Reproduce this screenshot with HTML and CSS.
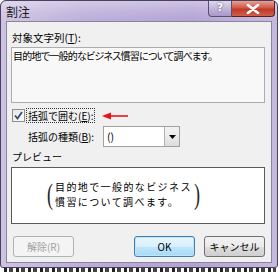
FILE: index.html
```html
<!DOCTYPE html>
<html lang="ja">
<head>
    <meta charset="UTF-8">
    <title>割注</title>
    <link rel="stylesheet" href="styles.css">
</head>
<body>
    <div class="window">
        <div class="title-bar">
            <span class="title">割注</span>
            <div class="caption-buttons">
                <div class="help-btn">?</div>
                <div class="close-btn">
                    <svg width="14" height="10" viewBox="0 0 14 10">
                        <path d="M2 1 L12 9 M12 1 L2 9" stroke="#fff" stroke-width="2.6" stroke-linecap="round"/>
                    </svg>
                </div>
            </div>
        </div>
        <div class="client">
            <div class="label first">対象文字列(<u>T</u>):</div>
            <div class="text-box">目的地で一般的なビジネス慣習について調べます。</div>

            <div class="check-row">
                <span class="checkbox">
                    <svg width="11" height="11" viewBox="0 0 11 11">
                        <path d="M2 5.5 L4.5 8.5 L9 2" fill="none" stroke="#3c4a6e" stroke-width="1.8"/>
                    </svg>
                </span>
                <span class="check-label">括弧で囲む(<u>E</u>):</span>
                <svg class="arrow" width="28" height="10" viewBox="0 0 28 10">
                    <path d="M8 5 L27 5" stroke="#e8151b" stroke-width="1.6"/>
                    <path d="M1 5 L10 1.5 L10 8.5 Z" fill="#e8151b"/>
                </svg>
            </div>

            <div class="combo-row">
                <span class="combo-label">括弧の種類(<u>B</u>):</span>
                <div class="combo">
                    <span class="combo-value">()</span>
                    <span class="combo-btn">
                        <svg width="7" height="4" viewBox="0 0 7 4"><path d="M0 0 L7 0 L3.5 4 Z" fill="#000"/></svg>
                    </span>
                </div>
            </div>

            <div class="label preview-label">プレビュー</div>
            <div class="preview">
                <span class="paren">(</span>
                <div class="preview-lines">
                    <div>目的地で一般的なビジネス</div>
                    <div>慣習について調べます。</div>
                </div>
                <span class="paren right">)</span>
            </div>

            <div class="buttons">
                <div class="btn disabled">解除(R)</div>
                <div class="spacer"></div>
                <div class="btn default">OK</div>
                <div class="btn">キャンセル</div>
            </div>
        </div>
    </div>
    <div class="behind"></div>
</body>
</html>
```

FILE: styles.css
```css
body{
    margin: 0;
    background-color: #fff;
    font-family: "Noto Sans CJK JP", "Noto Sans", sans-serif;
    font-size: 10.5px;
    color: #000;
    width: 280px;
    height: 272px;
    overflow: hidden;
}
.window{
    width: 276px;
    height: 266px;
    border: 1px solid #4a4060;
    border-radius: 6px 6px 3px 3px;
    background: linear-gradient(90deg, #cfc3e3 0%, #bcaeda 30%, #b3a3d4 70%, #c6b9df 100%);
    box-sizing: content-box;
}
.title-bar{
    height: 20px;
    display: flex;
    align-items: flex-start;
    background: linear-gradient(180deg, rgba(255,255,255,0.35) 0%, rgba(255,255,255,0.1) 60%, rgba(255,255,255,0) 100%);
    border-radius: 6px 6px 0 0;
}
.title{
    font-size: 12px;
    line-height: 12px;
    padding: 5px 0 0 5px;
    color: #1a1a1a;
}
.caption-buttons{
    margin-left: auto;
    margin-right: 2px;
    display: flex;
}
.help-btn{
    width: 24px;
    height: 16px;
    border: 1px solid #5a4f70;
    border-top: none;
    border-radius: 0 0 0 4px;
    background: linear-gradient(180deg, #e0d8ec 0%, #c2b6da 50%, #a898c8 100%);
    color: #fff;
    font-family: "DejaVu Sans", sans-serif;
    font-weight: bold;
    font-size: 11px;
    text-align: center;
    line-height: 14px;
    text-shadow: 0 0 2px #4a3f66;
    box-sizing: border-box;
}
.close-btn{
    width: 43px;
    height: 16px;
    border: 1px solid #5a2020;
    border-top: none;
    border-left: none;
    border-radius: 0 0 4px 0;
    background: linear-gradient(180deg, #e8a090 0%, #d05a48 45%, #c0392b 55%, #d0604a 100%);
    display: flex;
    align-items: center;
    justify-content: center;
    box-sizing: border-box;
}
.client{
    margin: 0 5px;
    height: 242px;
    background-color: #f0f0f0;
    border: 1px solid #8a8598;
    box-sizing: border-box;
    padding: 8px 6px 0 4px;
}
.label{
    height: 16px;
    line-height: 16px;
    padding-left: 1px;
}
.first{
    margin-bottom: 1px;
}
.text-box{
    height: 56px;
    border: 1px solid #acacb0;
    background-color: #f8f8f8;
    box-sizing: border-box;
    padding: 1px 1px;
    line-height: 14px;
    font-size: 10px;
    font-feature-settings: "palt";
    letter-spacing: -0.75px;
}
.check-row{
    margin-top: 5px;
    height: 15px;
    display: flex;
    align-items: center;
    padding-left: 1px;
}
.checkbox{
    width: 13px;
    height: 13px;
    border: 1px solid #8e8f8f;
    box-sizing: border-box;
    background: linear-gradient(135deg, #e8e8e8 0%, #fafafa 100%);
    display: flex;
    align-items: center;
    justify-content: center;
}
.check-label{
    margin-left: 1px;
    padding: 0 1px;
    border: 1px dotted #333;
    line-height: 13px;
    font-size: 10px;
}
.arrow{
    margin-left: 6px;
}
.combo-row{
    margin-top: 3px;
    height: 21px;
    display: flex;
    align-items: center;
    padding-left: 17px;
}
.combo-label{
    width: 75px;
    font-size: 10px;
}
.combo{
    width: 77px;
    height: 21px;
    border: 1px solid #a0a0a0;
    background-color: #fff;
    box-sizing: border-box;
    display: flex;
}
.combo-value{
    flex: 1;
    padding-left: 3px;
    line-height: 19px;
}
.combo-btn{
    width: 14px;
    border-left: 1px solid #b0b0b0;
    background: linear-gradient(180deg, #f2f2f2 0%, #ebebeb 50%, #dcdcdc 100%);
    display: flex;
    align-items: center;
    justify-content: center;
}
.preview-label{
    margin-top: 3px;
    height: 14px;
    line-height: 14px;
    font-size: 10px;
}
.preview{
    margin-top: 3px;
    height: 57px;
    border: 1px solid #5a5a5a;
    background-color: #fff;
    box-sizing: border-box;
    display: flex;
    align-items: center;
    padding-left: 33px;
    padding-bottom: 4px;
}
.paren{
    font-family: "Liberation Serif", serif;
    font-size: 30px;
    line-height: 30px;
    transform: scaleX(0.6);
    color: #222;
}
.preview-lines{
    font-size: 10px;
    letter-spacing: 1.4px;
    line-height: 15px;
}
.buttons{
    margin-top: 12px;
    display: flex;
    padding-left: 2px;
}
.spacer{
    flex: 1;
}
.btn{
    width: 61px;
    height: 21px;
    border: 1px solid #707070;
    border-radius: 3px;
    box-sizing: border-box;
    background: linear-gradient(180deg, #f2f2f2 0%, #ebebeb 50%, #dddddd 51%, #cfcfcf 100%);
    text-align: center;
    line-height: 19px;
    margin-left: 9px;
    font-size: 10px;
}
.btn.disabled{
    margin-left: 0;
    border-color: #adb2b5;
    background: #f4f4f4;
    color: #a0a0a0;
}
.btn.default{
    border-color: #3c7fb1;
    background: linear-gradient(180deg, #eaf6fd 0%, #d9f0fc 50%, #bee6fd 51%, #a7d9f5 100%);
    box-shadow: inset 0 0 0 1px #c0e4f8;
}
.behind{
    height: 4px;
    margin: 0 4px;
    background: repeating-linear-gradient(90deg, #222 0px, #222 3px, #fff 3px, #fff 5px, #444 5px, #444 9px, #fff 9px, #fff 12px);
}
```
